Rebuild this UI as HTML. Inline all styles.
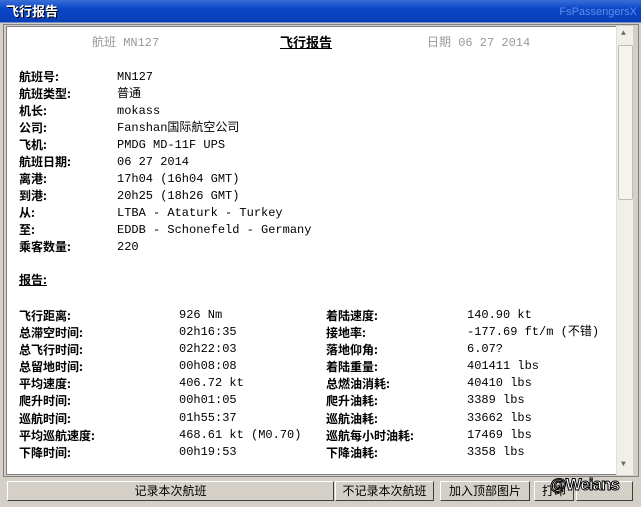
<!DOCTYPE html>
<html><head><meta charset="utf-8"><style>
*{margin:0;padding:0;box-sizing:border-box}
body{width:641px;height:507px;background:#d4d0c8;position:relative;overflow:hidden;font-family:"Liberation Mono","Noto Sans CJK SC",monospace;font-size:12px;color:#000}
#title{position:absolute;left:0;top:0;width:641px;height:23px;background:linear-gradient(#3a6fd8,#0a46c8 40%,#0a3fb8);border-bottom:1px solid #6f8fc8}
#title .t{position:absolute;left:6px;top:4px;color:#fff;font-weight:bold;font-family:"Noto Sans CJK SC",sans-serif;font-size:13px;line-height:14px;text-shadow:1px 1px 0 #000}
#title .r{position:absolute;right:4px;top:6px;color:#5f8fe8;font-family:"Liberation Sans",sans-serif;font-size:11px}
#frame{position:absolute;left:3px;top:24px;width:636px;height:453px;border:1px solid #808080;background:#d4d0c8}
#panel{position:absolute;left:6px;top:26px;width:610px;height:449px;background:#fff;border:1px solid #808080;border-right:none}
#sb{position:absolute;left:616px;top:26px;width:17px;height:449px;background:#f0efea;border-left:1px solid #e0ded8}
#sb .th{position:absolute;left:1px;top:19px;width:15px;height:155px;background:#f4f3ee;border:1px solid #c0bdb0;border-radius:2px}
.a{position:absolute;font-size:8px;color:#666;left:4px}
.x{position:absolute;white-space:nowrap;line-height:14px}
.b{font-weight:bold;font-family:"Noto Sans CJK SC",sans-serif}
.g{color:#999}
.btn{position:absolute;top:481px;height:20px;background:#d4d0c8;border:1px solid;border-color:#fff #404040 #404040 #fff;font-family:"Noto Sans CJK SC",sans-serif;font-size:12px;text-align:center;line-height:17px}
</style></head><body>
<div id="title"><span class="t">飞行报告</span><span class="r">FsPassengersX</span></div>
<div id="frame"></div>
<div id="panel"></div>
<div id="sb"><span class="a" style="top:3px">▲</span><div class="th"></div><span class="a" style="top:434px">▼</span></div>
<div class="x g" style="left:92px;top:36px">航班 MN127</div>
<div class="x b" style="left:280px;top:35px;text-decoration:underline;font-size:13px">飞行报告</div>
<div class="x g" style="left:427px;top:36px">日期 06 27 2014</div>
<div class="x b" style="left:19px;top:68px;line-height:17px">航班号:<br>航班类型:<br>机长:<br>公司:<br>飞机:<br>航班日期:<br>离港:<br>到港:<br>从:<br>至:<br>乘客数量:</div>
<div class="x" style="left:117px;top:69px;line-height:17px">MN127<br>普通<br>mokass<br>Fanshan国际航空公司<br>PMDG MD-11F UPS<br>06 27 2014<br>17h04 (16h04 GMT)<br>20h25 (18h26 GMT)<br>LTBA - Ataturk - Turkey<br>EDDB - Schonefeld - Germany<br>220</div>
<div class="x b" style="left:19px;top:273px;text-decoration:underline">报告:</div>
<div class="x b" style="left:19px;top:307px;line-height:17.1px">飞行距离:<br>总滞空时间:<br>总飞行时间:<br>总留地时间:<br>平均速度:<br>爬升时间:<br>巡航时间:<br>平均巡航速度:<br>下降时间:</div>
<div class="x" style="left:179px;top:307px;line-height:17.1px">926 Nm<br>02h16:35<br>02h22:03<br>00h08:08<br>406.72 kt<br>00h01:05<br>01h55:37<br>468.61 kt (M0.70)<br>00h19:53</div>
<div class="x b" style="left:326px;top:307px;line-height:17.1px">着陆速度:<br>接地率:<br>落地仰角:<br>着陆重量:<br>总燃油消耗:<br>爬升油耗:<br>巡航油耗:<br>巡航每小时油耗:<br>下降油耗:</div>
<div class="x" style="left:467px;top:307px;line-height:17.1px">140.90 kt<br>-177.69 ft/m (不错)<br>6.07?<br>401411 lbs<br>40410 lbs<br>3389 lbs<br>33662 lbs<br>17469 lbs<br>3358 lbs</div>
<div class="btn" style="left:7px;width:327px">记录本次航班</div>
<div class="btn" style="left:335px;width:99px">不记录本次航班</div>
<div class="btn" style="left:440px;width:90px">加入顶部图片</div>
<div class="btn" style="left:534px;width:40px">打印</div>
<div class="btn" style="left:576px;width:57px"></div>
<div class="x" style="left:550px;top:478px;font-family:'Liberation Sans',sans-serif;font-size:17px;font-weight:bold;color:#fff;-webkit-text-stroke:1px #000;letter-spacing:-1px">@Weians</div>
</body></html>
